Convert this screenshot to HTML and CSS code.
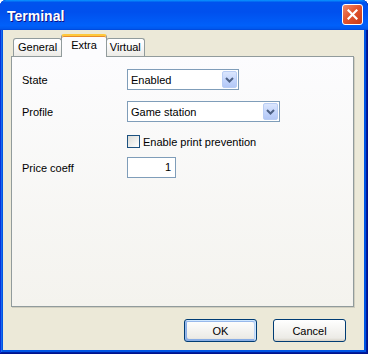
FILE: index.html
```html
<!DOCTYPE html>
<html lang="en">
<head>
    <meta charset="UTF-8">
    <meta name="viewport" content="width=device-width, initial-scale=1.0">
    <title>Terminal</title>
    <link rel="stylesheet" href="styles.css">
</head>
<body>
    <div class="window">
        <div class="titlebar">
            <span class="title">Terminal</span>
            <button class="close" aria-label="Close">
                <svg width="11" height="11" viewBox="0 0 11 11"><path d="M1.5 1.5 L9.5 9.5 M9.5 1.5 L1.5 9.5" stroke="#fff" stroke-width="2.2" stroke-linecap="square"/></svg>
            </button>
        </div>

        <div class="client">
            <div class="tabs">
                <div class="tab tab-general">General</div>
                <div class="tab active">Extra</div>
                <div class="tab tab-virtual">Virtual</div>
            </div>

            <div class="panel">
                <div class="row row-state">
                    <span class="label">State</span>
                    <div class="select select-state">
                        <span class="value">Enabled</span>
                        <span class="arrow"><svg width="9" height="6" viewBox="0 0 9 6"><path d="M1 1 L4.5 4.5 L8 1" fill="none" stroke="#4d6185" stroke-width="2"/></svg></span>
                    </div>
                </div>
                <div class="row row-profile">
                    <span class="label">Profile</span>
                    <div class="select select-profile">
                        <span class="value">Game station</span>
                        <span class="arrow"><svg width="9" height="6" viewBox="0 0 9 6"><path d="M1 1 L4.5 4.5 L8 1" fill="none" stroke="#4d6185" stroke-width="2"/></svg></span>
                    </div>
                </div>
                <div class="row row-check">
                    <span class="label"></span>
                    <span class="checkbox"></span>
                    <span class="check-label">Enable print prevention</span>
                </div>
                <div class="row row-price">
                    <span class="label">Price coeff</span>
                    <div class="input">1</div>
                </div>
            </div>

            <div class="buttons">
                <button class="btn default">OK</button>
                <button class="btn">Cancel</button>
            </div>
        </div>
    </div>
</body>
</html>
```

FILE: styles.css
```css
body {
    margin: 0;
    font-family: "Liberation Sans", Arial, sans-serif;
    font-size: 11px;
    color: #000;
    background: #fff;
}
.window {
    width: 368px;
    height: 354px;
    display: flex;
    flex-direction: column;
    background: #0054e3;
    box-shadow: inset -1px -1px #00138c, inset 1px 1px #0831d9, inset -2px -2px #001ea0, inset 2px 2px #166aee;
    border-radius: 6px 6px 0 0;
    overflow: hidden;
}
.titlebar {
    height: 30px;
    flex: none;
    display: flex;
    align-items: center;
    padding: 0 5px 0 7px;
    background: linear-gradient(to bottom, #0997ff, #0053ee 8%, #0050ee 40%, #0060fa 85%, #0058ee 95%, #0046d8);
    border-radius: 6px 6px 0 0;
}
.title {
    flex: 1;
    color: #fff;
    font-weight: bold;
    font-size: 14px;
    text-shadow: 1px 1px #0f1089;
    padding-top: 1px;
}
.close {
    width: 21px;
    height: 21px;
    padding: 0;
    border: 1px solid #fff;
    border-radius: 3px;
    background: linear-gradient(135deg, #f08a6c, #e2552e 45%, #c73b19);
    display: flex;
    align-items: center;
    justify-content: center;
    margin-top: -1px;
}
.client {
    flex: 1;
    margin: 0 4px 4px 3px;
    background: #ece9d8;
    padding: 6px 0 0 8px;
    display: flex;
    flex-direction: column;
}
.tabs {
    display: flex;
    align-items: flex-end;
    height: 20px;
    padding-left: 2px;
}
.tab {
    position: relative;
    height: 17px;
    line-height: 17px;
    border: 1px solid #919b9c;
    border-bottom: none;
    border-radius: 3px 3px 0 0;
    background: linear-gradient(to bottom, #fff, #fcfcfe 30%, #ecebe6);
}
.tab-general { padding: 0 4px; }
.tab-virtual { padding: 0 3px; }
.tab.active {
    z-index: 1;
    height: 21px;
    line-height: 19px;
    margin: 0 -1px -1px -1px;
    padding: 0 9px;
    background: #fcfcfe;
    border-top: 2px solid #ffc83c;
    box-shadow: inset 0 1px #e68b2c;
}
.panel {
    width: 343px;
    height: 251px;
    box-sizing: border-box;
    border: 1px solid #919b9c;
    background: linear-gradient(to bottom, #fcfcfe, #f4f3ee);
    box-shadow: 1px 1px #d0cebf;
    padding: 12px 10px 0 10px;
}
.row {
    display: flex;
    align-items: center;
}
.label {
    width: 105px;
    flex: none;
}
.row-state { height: 21px; }
.row-profile { height: 21px; margin-top: 11px; }
.row-check { height: 13px; margin-top: 13px; }
.row-price { height: 21px; margin-top: 9px; }
.select {
    height: 21px;
    box-sizing: border-box;
    border: 1px solid #7f9db9;
    background: #fff;
    display: flex;
    align-items: center;
    padding: 0 1px 0 3px;
}
.select-state { width: 112px; }
.select-profile { width: 153px; }
.select .value { flex: 1; }
.arrow {
    width: 15px;
    height: 17px;
    box-sizing: border-box;
    border: 1px solid #b9cdf4;
    border-radius: 2px;
    background: linear-gradient(to bottom, #dbe6fd, #c1d3fb 60%, #b4c8f6);
    display: flex;
    align-items: center;
    justify-content: center;
}
.checkbox {
    width: 13px;
    height: 13px;
    box-sizing: border-box;
    border: 1px solid #1c5180;
    background: linear-gradient(135deg, #dcdcd7, #fff);
}
.check-label { margin-left: 3px; }
.input {
    width: 49px;
    height: 21px;
    box-sizing: border-box;
    border: 1px solid #7f9db9;
    background: #fff;
    text-align: right;
    line-height: 19px;
    padding-right: 4px;
}
.buttons {
    display: flex;
    justify-content: flex-end;
    gap: 16px;
    margin-top: 12px;
    padding-right: 18px;
}
.btn {
    width: 73px;
    height: 23px;
    font-family: inherit;
    font-size: 11px;
    color: #000;
    border: 1px solid #003c74;
    border-radius: 3px;
    background: linear-gradient(to bottom, #fff, #ecebe6 86%, #d6d0c5);
    padding: 0;
}
.btn.default {
    box-shadow: inset -1px 1px #cee7ff, inset 1px 2px #98b8ea, inset -2px 2px #bcd4f6, inset 1px -1px #89ade4, inset 2px -2px #89ade4;
}
```
